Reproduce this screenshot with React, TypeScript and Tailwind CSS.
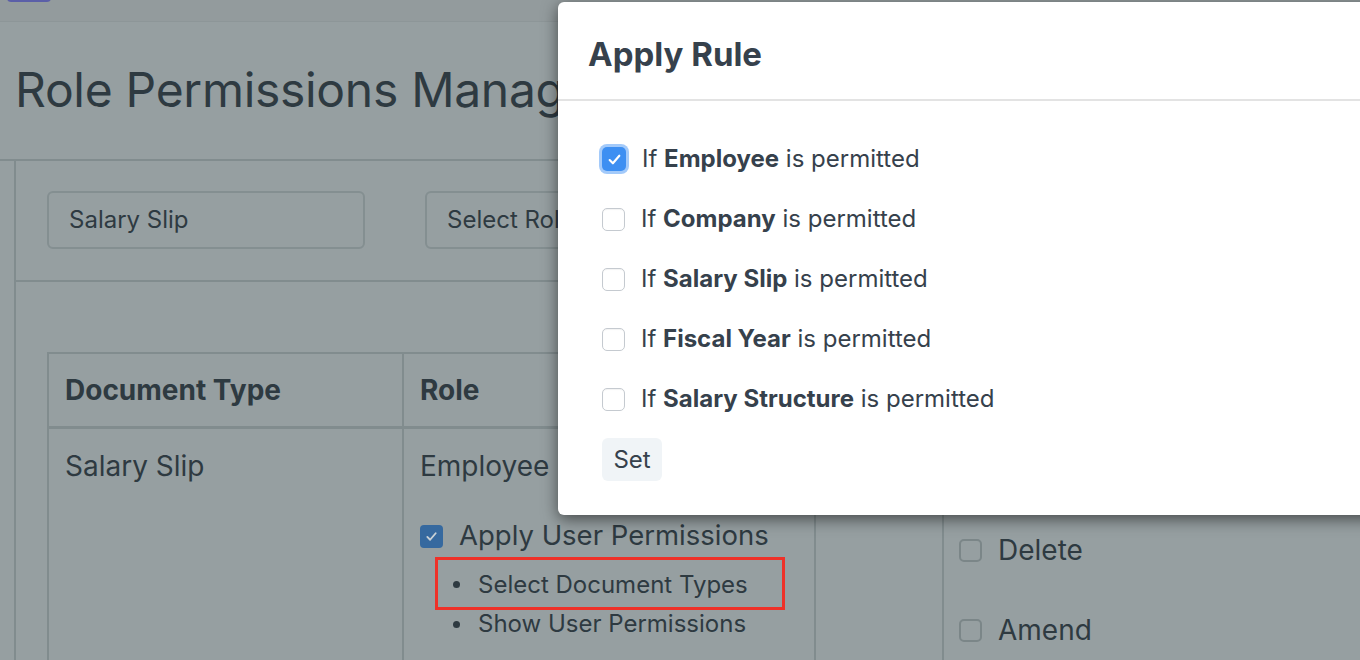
import React from 'react';

const RULES = ['Employee', 'Company', 'Salary Slip', 'Fiscal Year', 'Salary Structure'];

// first one sits under the dialog
const PERMS = ['', 'Delete', 'Amend'];

function Check({ checked }: { checked?: boolean }) {
  if (checked) {
    return (
      <span className="flex h-[24px] w-[24px] shrink-0 items-center justify-center rounded-[5px] bg-[#3d8ff2] ring-[3px] ring-[#a3cafa]">
        <svg width="15" height="15" viewBox="0 0 14 14" fill="none">
          <path d="M2.5 7.5l3 3 6-7" stroke="#fff" strokeWidth="2" strokeLinecap="round" strokeLinejoin="round" />
        </svg>
      </span>
    );
  }
  return <span className="h-[23px] w-[23px] shrink-0 rounded-[5px] border border-[#c5cad0] bg-white shadow-[inset_0_1px_1px_rgba(0,0,0,0.05)]" />;
}

export default function App() {
  return (
    <div className="relative h-[660px] w-[1360px] overflow-hidden bg-[#969fa1] font-['Inter',sans-serif] text-[#2e3a41]">
      {/* dimmed page under the dialog */}
      <header className="flex h-[22px] items-start border-b border-[#8d9698] bg-[#939b9d] pl-[7px]">
        <span className="-mt-[6px] h-[8px] w-[44px] rounded-full bg-[#5b5fa8]" />
      </header>

      <div className="flex h-[139px] items-center border-b-2 border-[#818c8e] pl-[15px] pb-[2px]">
        <h1 className="text-[48px] leading-none tracking-[-0.3px]">Role Permissions Manager</h1>
      </div>

      <div className="flex">
        <div className="w-[16px] shrink-0 border-r-2 border-[#818c8e]" />
        <main className="flex-1">
          <div className="flex gap-[60px] border-b-2 border-[#818c8e] px-[31px] pt-[30px] pb-[31px]">
            <div className="flex h-[58px] w-[318px] items-center rounded-[6px] border-2 border-[#848f91] px-[20px] text-[24px]">
              Salary Slip
            </div>
            <div className="flex h-[58px] w-[318px] items-center rounded-[6px] border-2 border-[#848f91] px-[20px] text-[24px]">
              Select Role
            </div>
          </div>

          <div className="pl-[31px] pt-[70px]">
            <div className="w-[1400px] border-2 border-[#818c8e]">
              <div className="flex h-[75px] border-b-[3px] border-[#818c8e] text-[28px] font-bold">
                <div className="flex w-[355px] items-center border-r-2 border-[#818c8e] px-[16px]">Document Type</div>
                <div className="flex w-[412px] items-center border-r-2 border-[#818c8e] px-[16px]">Role</div>
                <div className="w-[128px] border-r-2 border-[#818c8e]" />
                <div className="flex-1" />
              </div>
              <div className="flex h-[300px]">
                <div className="w-[355px] border-r-2 border-[#818c8e] px-[16px] pt-[19px] text-[28px] leading-[36px]">
                  Salary Slip
                </div>
                <div className="w-[412px] border-r-2 border-[#818c8e] pt-[19px]">
                  <div className="px-[16px] text-[28px] leading-[36px]">Employee</div>
                  <div className="mt-[34px] flex h-[36px] items-center gap-[16px] px-[16px]">
                    <span className="flex h-[23px] w-[23px] items-center justify-center rounded-[4px] bg-[#36699f]">
                      <svg width="13" height="13" viewBox="0 0 14 14" fill="none">
                        <path d="M2.5 7.5l3 3 6-7" stroke="#c9d1d6" strokeWidth="2" strokeLinecap="round" strokeLinejoin="round" />
                      </svg>
                    </span>
                    <span className="text-[27.5px]">Apply User Permissions</span>
                  </div>
                  <ul className="mt-[3px] pl-[31px] text-[24px]">
                    <li className="flex h-[53px] w-[350px] items-center gap-[18px] border-[3px] border-[#ef3128] pl-[15px] pt-[2px]">
                      <span className="h-[7px] w-[7px] rounded-full bg-[#2e3a41]" />
                      Select Document Types
                    </li>
                    <li className="flex h-[26px] items-center gap-[18px] pl-[18px] pt-[2px]">
                      <span className="h-[7px] w-[7px] rounded-full bg-[#2e3a41]" />
                      Show User Permissions
                    </li>
                  </ul>
                </div>
                <div className="w-[128px] border-r-2 border-[#818c8e]" />
                <div className="flex flex-1 flex-col gap-[40px] px-[15px] pt-[21px]">
                  {PERMS.map((p, i) => (
                    <div key={i} className="flex h-[40px] items-center gap-[16px] text-[28px]">
                      <span className="h-[23px] w-[23px] rounded-[5px] border-2 border-[#7b8688]" />
                      {p}
                    </div>
                  ))}
                </div>
              </div>
            </div>
          </div>
        </main>
      </div>

      {/* dialog */}
      <div className="absolute left-[558px] top-[2px] h-[513px] w-[860px] rounded-[6px] bg-white text-[#36414c] shadow-[0_4px_16px_rgba(0,0,0,0.55)]">
        <div className="flex h-[99px] items-center border-b-2 border-[#e3e3e3] px-[30px] pt-[8px]">
          <h2 className="text-[33px] font-bold">Apply Rule</h2>
        </div>
        <div className="pt-[28px] pl-[44px]">
          {RULES.map((r, i) => (
            <div key={r} className="flex h-[60px] items-center gap-[16px] text-[24px]">
              <Check checked={i === 0} />
              <span>
                If <b className="font-bold">{r}</b> is permitted
              </span>
            </div>
          ))}
          <button className="mt-[9px] h-[43px] w-[60px] rounded-[6px] bg-[#f0f4f7] text-[24px] text-[#36414c]">Set</button>
        </div>
      </div>
    </div>
  );
}
